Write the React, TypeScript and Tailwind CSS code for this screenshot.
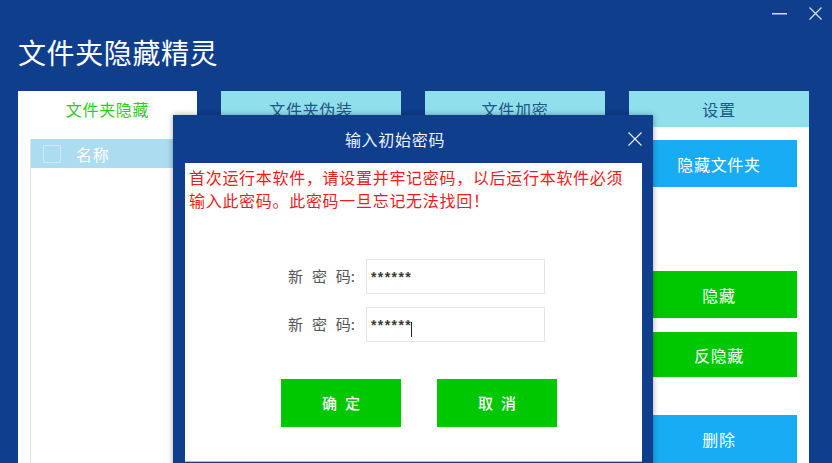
import React from 'react';

const FONT = "font-['Noto_Sans_CJK_SC','Noto_Sans',sans-serif]";

const TABS = ['文件夹隐藏', '文件夹伪装', '文件加密', '设置'];

function Tab({ label, active }: { label: string; active?: boolean }) {
  return (
    <div
      className={
        active
          ? 'w-[179px] h-[36px] flex items-center justify-center bg-white text-[16px] tracking-[0.7px] text-[#2fcc1e]'
          : 'w-[180px] h-[36px] flex items-center justify-center bg-[#8fe0ec] text-[16px] tracking-[0.7px] text-[#22558a]'
      }
    >
      {label}
    </div>
  );
}

function PasswordRow({ caret }: { caret?: boolean }) {
  return (
    <div className="flex items-center pl-[103px]">
      <div className="w-[67px] flex justify-between text-[15px] text-[#555555]">
        <span>新</span>
        <span>密</span>
        <span>码:</span>
      </div>
      <div className="ml-[11px] w-[179px] h-[35px] border border-[#e4e4e4] flex items-center pl-[4px]">
        <span className="font-['Liberation_Sans',sans-serif] text-[14px] font-bold tracking-[1.4px] text-[#3a3a3a] leading-none">
          ******
        </span>
        {caret && <span className="w-px h-[15px] bg-[#222222] mt-[10px] -ml-[1px]" />}
      </div>
    </div>
  );
}

export default function App() {
  return (
    <div className={`${FONT} relative w-[832px] h-[463px] overflow-hidden bg-[#0f3e8d] flex flex-col`}>
      {/* window controls */}
      <div className="h-[28px] flex justify-end items-start pr-[10px] gap-[22px] shrink-0">
        <svg width="15" height="2" className="mt-[13px]" viewBox="0 0 15 2">
          <rect width="15" height="1.5" fill="#d3def2" />
        </svg>
        <svg width="13" height="13" className="mt-[7px]" viewBox="0 0 13 13">
          <path d="M0.5 0.5 L12.5 12.5 M12.5 0.5 L0.5 12.5" stroke="#d3def2" strokeWidth="1.3" />
        </svg>
      </div>

      <div className="h-[63px] pl-[18px] pt-[4px] shrink-0">
        <h1 className="text-[28px] leading-[40px] tracking-[0.6px] text-white">文件夹隐藏精灵</h1>
      </div>

      {/* tabs */}
      <div className="flex gap-[24px] pl-[18px] shrink-0">
        {TABS.map((t, i) => (
          <Tab key={t} label={t} active={i === 0} />
        ))}
      </div>

      {/* content */}
      <div className="ml-[18px] w-[791px] flex-1 bg-white flex">
        <div className="flex-1 pl-[12px] pt-[12px] pr-[12px]">
          <div className="h-full border-l border-[#e2e2e2]">
            <div className="h-[29px] bg-[#abdcef] flex items-center pl-[12px]">
              <div className="w-[18px] h-[18px] border border-[#cfe9f4]" />
              <span className="ml-[15px] text-[16px] tracking-[0.7px] text-white">名称</span>
            </div>
          </div>
        </div>
        <div className="w-[180px] px-[12px] flex flex-col text-white text-[16px] tracking-[0.7px]">
          <div className="mt-[13px] h-[47px] bg-[#17acf3] flex items-center justify-center">隐藏文件夹</div>
          <div className="mt-[84px] h-[47px] bg-[#00c800] flex items-center justify-center">隐藏</div>
          <div className="mt-[14px] h-[45px] bg-[#00c800] flex items-center justify-center">反隐藏</div>
          <div className="mt-[38px] h-[48px] bg-[#17acf3] flex items-center justify-center">删除</div>
        </div>
      </div>

      {/* dialog */}
      <div className="absolute left-[173px] top-[115px] w-[480px] bg-[#0f3e8d] pl-[12px] pr-[11px] pb-[12px] shadow-[0_0_6px_rgba(0,0,0,0.35)]">
        <div className="h-[48px] flex items-center">
          <div className="flex-1 text-center text-[16px] tracking-[0.7px] text-[#eef3fb]">输入初始密码</div>
          <div className="w-[37px] flex justify-end">
            <svg width="14" height="14" viewBox="0 0 14 14">
              <path d="M0.5 0.5 L13.5 13.5 M13.5 0.5 L0.5 13.5" stroke="#e6edf8" strokeWidth="1.2" />
            </svg>
          </div>
        </div>
        <div className="h-[299px] bg-white border-b border-[#a9bbe4] flex flex-col">
          <p className="pt-[3px] pl-[4px] text-[16px] leading-[23px] tracking-[0.7px] text-[#f01a1a]">
            首次运行本软件，请设置并牢记密码，以后运行本软件必须
            <br />
            输入此密码。此密码一旦忘记无法找回！
          </p>
          <div className="mt-[47px] flex flex-col gap-[13px]">
            <PasswordRow />
            <PasswordRow caret />
          </div>
          <div className="mt-[37px] pl-[96px] flex gap-[36px] text-white text-[15px] font-medium">
            <div className="w-[120px] h-[48px] bg-[#00c800] flex items-center justify-center gap-[8px]">
              <span>确</span>
              <span>定</span>
            </div>
            <div className="w-[120px] h-[48px] bg-[#00c800] flex items-center justify-center gap-[8px]">
              <span>取</span>
              <span>消</span>
            </div>
          </div>
        </div>
      </div>
    </div>
  );
}
